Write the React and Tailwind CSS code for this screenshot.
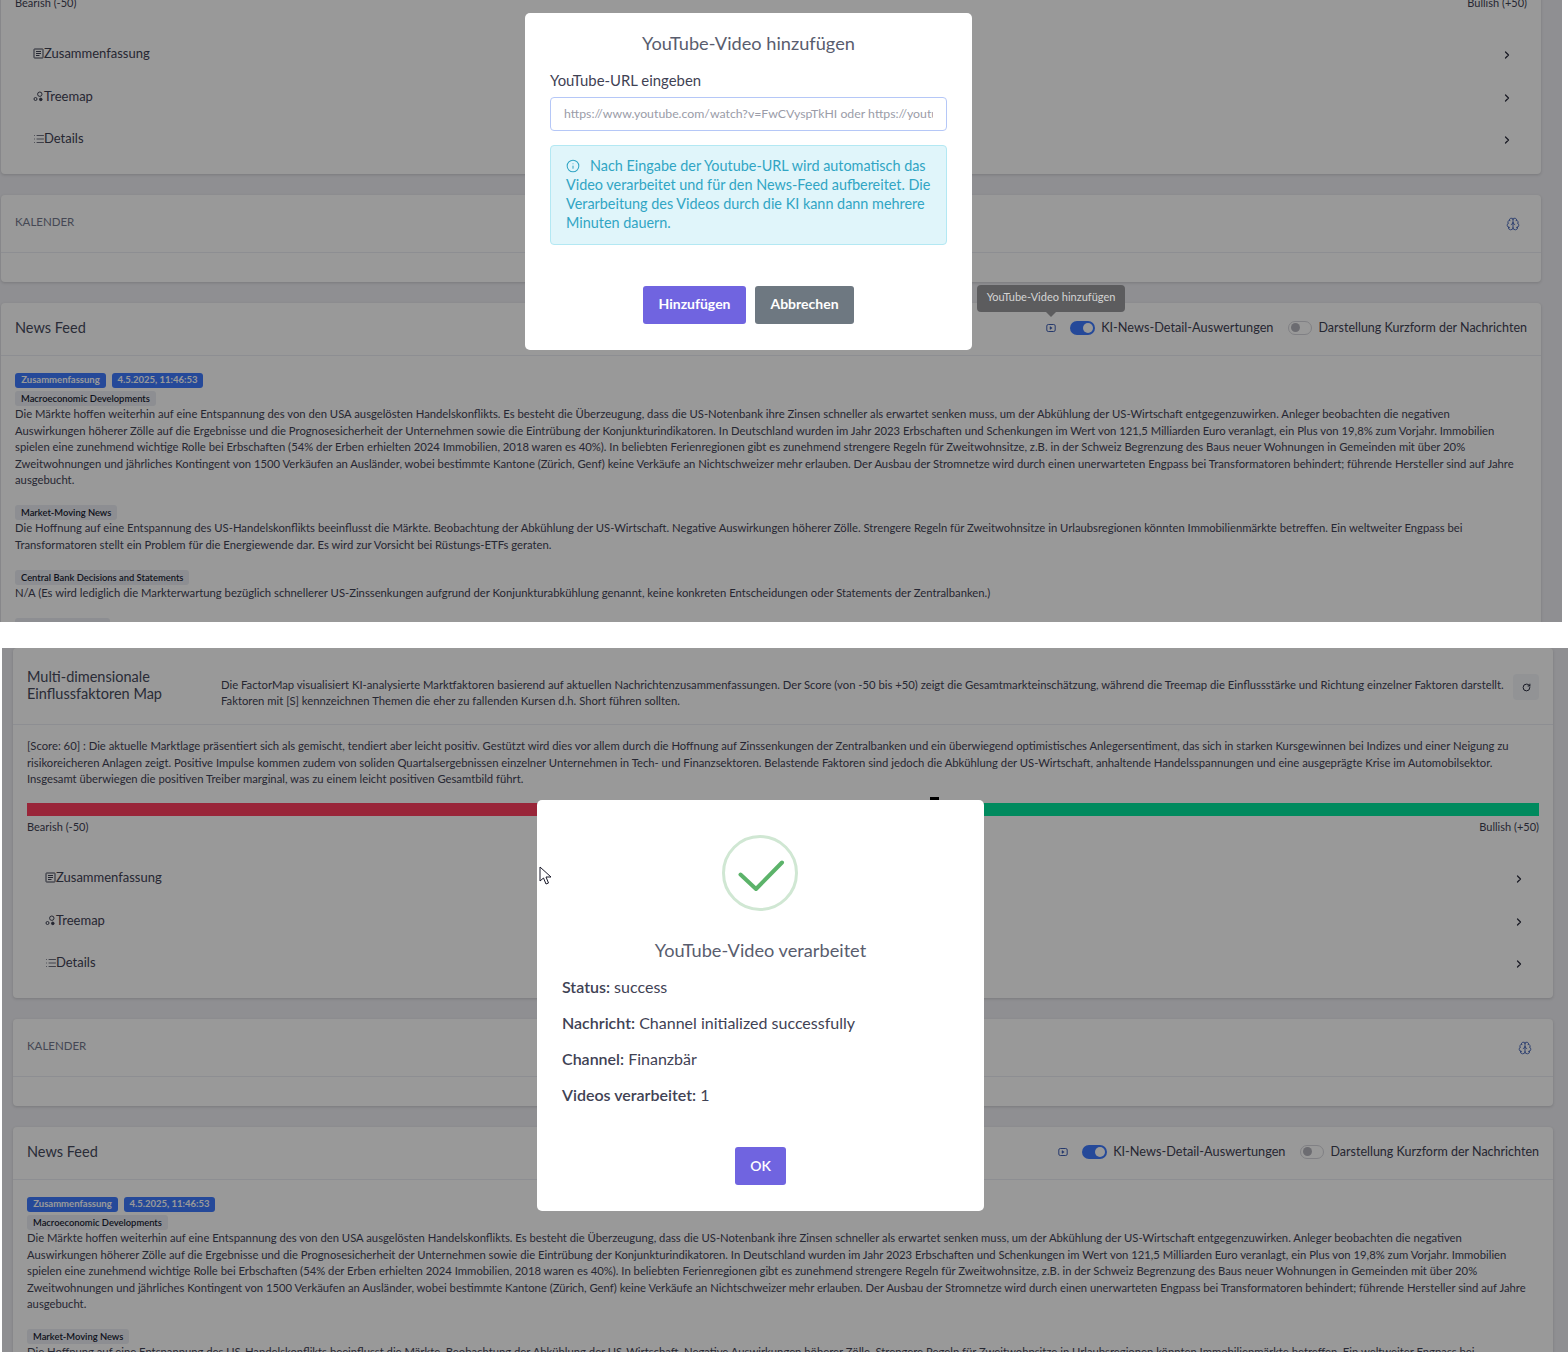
import React from "react";
import { Brain, ChevronRight, Info, List, RotateCw } from "lucide-react";

const summaryLines = [
  "[Score: 60] : Die aktuelle Marktlage präsentiert sich als gemischt, tendiert aber leicht positiv. Gestützt wird dies vor allem durch die Hoffnung auf Zinssenkungen der Zentralbanken und ein überwiegend optimistisches Anlegersentiment, das sich in starken Kursgewinnen bei Indizes und einer Neigung zu",
  "risikoreicheren Anlagen zeigt. Positive Impulse kommen zudem von soliden Quartalsergebnissen einzelner Unternehmen in Tech- und Finanzsektoren. Belastende Faktoren sind jedoch die Abkühlung der US-Wirtschaft, anhaltende Handelsspannungen und eine ausgeprägte Krise im Automobilsektor.",
  "Insgesamt überwiegen die positiven Treiber marginal, was zu einem leicht positiven Gesamtbild führt.",
];

const newsSections = [
  {
    title: "Macroeconomic Developments",
    lines: [
      "Die Märkte hoffen weiterhin auf eine Entspannung des von den USA ausgelösten Handelskonflikts. Es besteht die Überzeugung, dass die US-Notenbank ihre Zinsen schneller als erwartet senken muss, um der Abkühlung der US-Wirtschaft entgegenzuwirken. Anleger beobachten die negativen",
      "Auswirkungen höherer Zölle auf die Ergebnisse und die Prognosesicherheit der Unternehmen sowie die Eintrübung der Konjunkturindikatoren. In Deutschland wurden im Jahr 2023 Erbschaften und Schenkungen im Wert von 121,5 Milliarden Euro veranlagt, ein Plus von 19,8% zum Vorjahr. Immobilien",
      "spielen eine zunehmend wichtige Rolle bei Erbschaften (54% der Erben erhielten 2024 Immobilien, 2018 waren es 40%). In beliebten Ferienregionen gibt es zunehmend strengere Regeln für Zweitwohnsitze, z.B. in der Schweiz Begrenzung des Baus neuer Wohnungen in Gemeinden mit über 20%",
      "Zweitwohnungen und jährliches Kontingent von 1500 Verkäufen an Ausländer, wobei bestimmte Kantone (Zürich, Genf) keine Verkäufe an Nichtschweizer mehr erlauben. Der Ausbau der Stromnetze wird durch einen unerwarteten Engpass bei Transformatoren behindert; führende Hersteller sind auf Jahre",
      "ausgebucht.",
    ],
  },
  {
    title: "Market-Moving News",
    lines: [
      "Die Hoffnung auf eine Entspannung des US-Handelskonflikts beeinflusst die Märkte. Beobachtung der Abkühlung der US-Wirtschaft. Negative Auswirkungen höherer Zölle. Strengere Regeln für Zweitwohnsitze in Urlaubsregionen könnten Immobilienmärkte betreffen. Ein weltweiter Engpass bei",
      "Transformatoren stellt ein Problem für die Energiewende dar. Es wird zur Vorsicht bei Rüstungs-ETFs geraten.",
    ],
  },
  {
    title: "Central Bank Decisions and Statements",
    lines: [
      "N/A (Es wird lediglich die Markterwartung bezüglich schnellerer US-Zinssenkungen aufgrund der Konjunkturabkühlung genannt, keine konkreten Entscheidungen oder Statements der Zentralbanken.)",
    ],
  },
];

const SummaryIcon = () => (
  <svg width="11" height="11" viewBox="0 0 11 11" fill="none" stroke="currentColor" strokeWidth="1">
    <rect x="1" y="1" width="9" height="9" rx="0.5" />
    <path d="M3 3.5h5M3 5.5h5M3 7.5h3.5" />
  </svg>
);

const TreemapIcon = () => (
  <svg width="11" height="11" viewBox="0 0 11 11" fill="none" stroke="currentColor" strokeWidth="1">
    <circle cx="6.8" cy="3.2" r="2.2" />
    <circle cx="2.5" cy="8" r="1.5" />
    <circle cx="7.8" cy="8.4" r="1.3" fill="currentColor" />
  </svg>
);

const PlayIcon = () => (
  <svg width="10" height="10" viewBox="0 0 10 10" fill="none" stroke="currentColor" strokeWidth="1">
    <rect x="0.8" y="1.5" width="8.4" height="7" rx="1.5" />
    <path d="M4 3.6v2.8l2.2-1.4z" fill="currentColor" strokeWidth="0.5" />
  </svg>
);

const Toggle = ({ on }) => (
  <span
    className={
      on
        ? "flex h-[14px] w-[25px] items-center justify-end rounded-full bg-[#3e7bff] pr-[2px]"
        : "flex h-[14px] w-[24px] items-center rounded-full border border-[#d6d6dc] bg-white pl-[2px]"
    }
  >
    <span className={on ? "h-[10px] w-[10px] rounded-full bg-white" : "h-[9px] w-[9px] rounded-full bg-[#b5b5bd]"} />
  </span>
);

const AccordionRow = ({ icon, label }) => (
  <div className="flex h-[42.5px] items-center justify-between pl-[18px] pr-[14px] text-[13px] text-[#3f4254]">
    <span className="flex items-center">
      {icon}
      <span>{label}</span>
    </span>
    <ChevronRight size={12} strokeWidth={2.5} className="mt-[3px] text-[#2c2e3e]" />
  </div>
);

const Dashboard = () => (
  <div className="flex w-[1540px] flex-col gap-[21px] text-[#3f4254]">
    <div className="rounded-[4px] bg-white shadow-[0_1px_3px_rgba(0,0,0,0.15)]">
      <div className="flex h-[77px] items-start border-b border-[#ebedf3] pl-[14px] pr-[14px] pt-[20px]">
        <h3 className="w-[194px] shrink-0 text-[14.5px] leading-[17px] text-[#464a5c]">
          Multi-dimensionale
          <br />
          Einflussfaktoren Map
        </h3>
        <p className="mt-[9px] flex-1 whitespace-nowrap text-[11.28px] leading-[16px]">
          Die FactorMap visualisiert KI-analysierte Marktfaktoren basierend auf aktuellen Nachrichtenzusammenfassungen. Der Score (von -50 bis +50) zeigt die Gesamtmarkteinschätzung, während die Treemap die Einflussstärke und Richtung einzelner Faktoren darstellt.
          <br />
          Faktoren mit [S] kennzeichnen Themen die eher zu fallenden Kursen d.h. Short führen sollten.
        </p>
        <button className="mt-[6px] flex h-[26px] w-[26px] items-center justify-center rounded-[4px] bg-[#f3f6f9]">
          <RotateCw size={9} strokeWidth={2.5} className="text-[#1f2133]" />
        </button>
      </div>
      <div className="px-[14px] pt-[13px]">
        <p className="whitespace-nowrap text-[11.28px] leading-[16.5px]">
          {summaryLines.map((line) => (
            <span key={line} className="block">{line}</span>
          ))}
        </p>
        <div className="relative mt-[15px] flex h-[13px]">
          <div className="flex-1 bg-[#ff3f60]" />
          <div className="flex-1 bg-[#00e69d]" />
          <div className="absolute left-[903px] top-[-6px] h-[6px] w-[9px] bg-black" />
        </div>
        <div className="mt-[4px] flex justify-between text-[11px] leading-[14px]">
          <span>Bearish (-50)</span>
          <span>Bullish (+50)</span>
        </div>
      </div>
      <div className="px-[14px] pb-[14px] pt-[23px]">
        <AccordionRow icon={<SummaryIcon />} label="Zusammenfassung" />
        <AccordionRow icon={<TreemapIcon />} label="Treemap" />
        <AccordionRow icon={<List size={12} strokeWidth={1.5} className="-mr-px" />} label="Details" />
      </div>
    </div>

    <div className="rounded-[4px] bg-white shadow-[0_1px_3px_rgba(0,0,0,0.15)]">
      <div className="flex h-[58px] items-center justify-between border-b border-[#ebedf3] px-[14px] pb-[4px] text-[11.5px] text-[#74788d]">
        <span>KALENDER</span>
        <Brain size={14} strokeWidth={1.5} className="mr-[7px] mt-[4px] text-[#3f5fb5]" />
      </div>
      <div className="h-[29px]" />
    </div>

    <div className="rounded-[4px] bg-white shadow-[0_1px_3px_rgba(0,0,0,0.15)]">
      <div className="flex h-[53px] items-center justify-between border-b border-[#ebedf3] px-[14px] pb-[2px]">
        <h3 className="text-[14.5px] text-[#464a5c]">News Feed</h3>
        <div className="flex items-center text-[12.5px]">
          <span className="mr-[14px] text-[#3f5fb5]"><PlayIcon /></span>
          <Toggle on />
          <span className="ml-[6px] text-[12.72px]">KI-News-Detail-Auswertungen</span>
          <span className="ml-[15px]"><Toggle /></span>
          <span className="ml-[6px]">Darstellung Kurzform der Nachrichten</span>
        </div>
      </div>
      <div className="px-[14px] pb-[40px] pt-[17px]">
        <div className="flex gap-[6px]">
          <span className="flex h-[15px] w-[91px] items-center justify-center rounded-[3px] bg-[#3e7bff] text-[9.5px] font-bold text-white">Zusammenfassung</span>
          <span className="flex h-[15px] w-[91px] items-center justify-center rounded-[3px] bg-[#3e7bff] text-[9.5px] font-bold text-white">4.5.2025, 11:46:53</span>
        </div>
        {newsSections.map((section, i) => (
          <div key={section.title} className={i === 0 ? "mt-[3px]" : "mt-[16.5px]"}>
            <span className="block h-[15px] w-fit rounded-[3px] bg-[#ebedf3] px-[6px] text-[9.4px] font-semibold leading-[15px] text-[#181c32]">{section.title}</span>
            <p className="whitespace-nowrap text-[11.28px] leading-[16.5px]">
              {section.lines.map((line) => (
                <span key={line} className="block">{line}</span>
              ))}
            </p>
          </div>
        ))}
        <div className="mt-[16.5px] h-[15px] w-[95px] rounded-[3px] bg-[#ebedf3]" />
      </div>
    </div>
  </div>
);

const AddVideoModal = () => (
  <div className="absolute left-[525px] top-[13px] flex h-[337px] w-[447px] flex-col rounded-[5px] bg-white px-[25px] pt-[19px]">
    <h2 className="text-center text-[18.2px] leading-[22px] text-[#595d6e]">YouTube-Video hinzufügen</h2>
    <label className="mt-[17px] text-[14.9px] leading-[18px] text-[#3f4254]">YouTube-URL eingeben</label>
    <div className="mt-[8px] flex h-[34px] items-center overflow-hidden rounded-[4px] border border-[#b5c7f7] px-[13px]">
      <span className="block w-full overflow-hidden whitespace-nowrap text-[12.3px] text-[#9a9ca8]">https://www.youtube.com/watch?v=FwCVyspTkHI oder https://youtu.be/FwCVyspTkHI</span>
    </div>
    <div className="mt-[14px] h-[100px] rounded-[4px] border border-[#b3e8f3] bg-[#e0f5fa] px-[15px] pt-[10px] text-[14.4px] leading-[19px] text-[#31a5c4]">
      <p className="whitespace-nowrap">
        <Info size={14} strokeWidth={1.75} className="mr-[10px] inline-block align-[-2px]" />
        Nach Eingabe der Youtube-URL wird automatisch das
        <br />
        Video verarbeitet und für den News-Feed aufbereitet. Die
        <br />
        Verarbeitung des Videos durch die KI kann dann mehrere
        <br />
        Minuten dauern.
      </p>
    </div>
    <div className="mt-[41px] flex justify-center gap-[9px]">
      <button className="h-[38px] w-[103px] rounded-[3px] bg-[#7064e0] pb-[3px] text-[14px] font-bold text-white">Hinzufügen</button>
      <button className="h-[38px] w-[99px] rounded-[3px] bg-[#6e7881] pb-[3px] text-[14px] font-bold text-white">Abbrechen</button>
    </div>
  </div>
);

const SuccessModal = () => (
  <div className="absolute left-[535px] top-[152px] flex h-[411px] w-[447px] flex-col rounded-[5px] bg-white px-[25px] pt-[35px]">
    <svg width="76" height="76" viewBox="0 0 76 76" fill="none" className="relative left-[-1px] mx-auto shrink-0">
      <circle cx="38" cy="38" r="36.5" stroke="#d0e7d3" strokeWidth="3" />
      <path d="M18.5 39.5 L34 54 L60 27.5" stroke="#5cb36a" strokeWidth="4" strokeLinecap="round" strokeLinejoin="round" />
    </svg>
    <h2 className="mt-[28px] text-center text-[18.2px] leading-[22px] text-[#595d6e]">YouTube-Video verarbeitet</h2>
    <div className="mt-[16px] flex flex-col gap-[16px] text-[16px] leading-[20px] text-[#3f4254]">
      <p><b className="font-semibold">Status:</b> success</p>
      <p><b className="font-semibold">Nachricht:</b> Channel initialized successfully</p>
      <p><b className="font-semibold">Channel:</b> Finanzbär</p>
      <p><b className="font-semibold">Videos verarbeitet:</b> 1</p>
    </div>
    <button className="mx-auto mt-[42px] h-[38px] w-[51px] rounded-[3px] bg-[#7064e0] pb-[2px] text-[14px] font-semibold text-white">OK</button>
  </div>
);

export default function App() {
  return (
    <div className="h-[1352px] w-[1568px] overflow-hidden bg-white font-['Lato','Noto_Sans',sans-serif]">
      <section className="relative h-[622px] w-[1562px] overflow-hidden bg-[#eeeef3]">
        <div className="ml-px mt-[-176px]">
          <Dashboard />
        </div>
        <div className="absolute inset-0 bg-black/40" />
        <AddVideoModal />
        <div className="absolute left-[977px] top-[285px] flex h-[27px] w-[148px] items-center justify-center rounded-[4px] bg-[#5c5c5e] pb-[2px] text-[11px] text-[#d4d4d4]">
          YouTube-Video hinzufügen
          <span className="absolute bottom-[-5px] left-[69px] h-0 w-0 border-x-[5px] border-t-[5px] border-x-transparent border-t-[#5c5c5e]" />
        </div>
      </section>
      <section className="relative ml-[2px] mt-[26px] h-[704px] w-[1566px] overflow-hidden bg-[#eeeef3]">
        <div className="ml-[11px]">
          <Dashboard />
        </div>
        <div className="absolute inset-0 bg-black/40" />
        <SuccessModal />
        <svg width="14" height="20" viewBox="0 0 14 20" className="absolute left-[537px] top-[218px]">
          <path d="M1 1 L1 15 L4.5 12 L7 18 L9.5 17 L7 11 L12 11 Z" fill="white" stroke="#1a1a2a" strokeWidth="1" />
        </svg>
      </section>
    </div>
  );
}
